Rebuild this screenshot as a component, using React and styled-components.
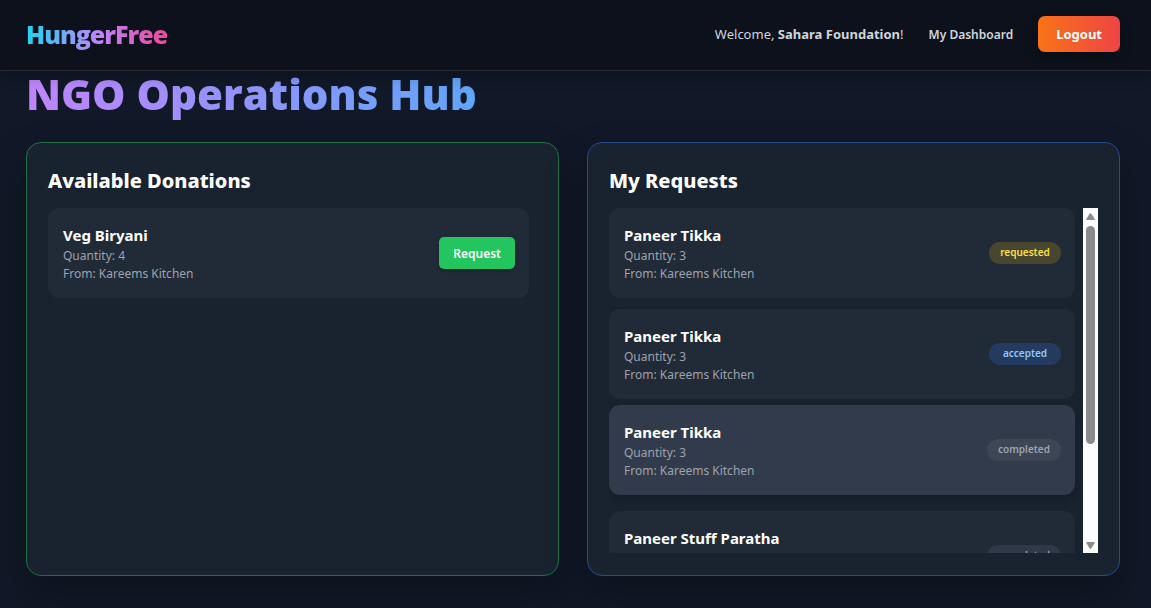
import React from "react";
import styled, { createGlobalStyle, css } from "styled-components";

const GlobalStyle = createGlobalStyle`
  *, *::before, *::after { box-sizing: border-box; }
  body {
    margin: 0;
    background: #111827;
    color: #fff;
    font-family: "Noto Sans", "Open Sans", sans-serif;
    font-size: 14px;
  }
  h1, h2, h3, p, ul { margin: 0; padding: 0; }
  button { font: inherit; color: inherit; border: 0; cursor: pointer; }
`;

const Page = styled.div`
  min-height: 100vh;
  background: #111827;
`;

const Header = styled.header`
  position: sticky;
  top: 0;
  z-index: 10;
  display: flex;
  align-items: center;
  justify-content: space-between;
  padding: 16px 31px 18px 26px;
  background: #0c111b;
  border-bottom: 1px solid #262a33;
  box-shadow: 0 4px 14px rgba(0, 0, 0, 0.3);
`;

const gradientText = css`
  width: fit-content;
  color: transparent;
  background-clip: text;
  -webkit-background-clip: text;
  font-family: "Open Sans", "Noto Sans", sans-serif;
  font-weight: 800;
`;

const Logo = styled.a`
  ${gradientText}
  background-image: linear-gradient(90deg, #22d3ee, #c084fc 52%, #ec4899);
  font-size: 25px;
  line-height: 36px;
  letter-spacing: -1px;
  text-decoration: none;
`;

const Nav = styled.nav`
  display: flex;
  align-items: center;
  gap: 25px;
  color: #d1d5db;
`;

const Welcome = styled.span`
  font-size: 13px;
  strong { font-weight: 700; }
`;

const NavLink = styled.a`
  color: inherit;
  font-size: 12px;
  font-weight: 600;
  text-decoration: none;
`;

const LogoutButton = styled.button`
  padding: 0 18px;
  height: 36px;
  border-radius: 7px;
  background: linear-gradient(90deg, #f97316, #ef4444);
  box-shadow: 0 6px 12px rgba(0, 0, 0, 0.25);
  color: #fff;
  font-size: 13px;
  font-weight: 700;
`;

const Main = styled.main`
  padding: 0 31px 32px 26px;
`;

const Title = styled.h1`
  ${gradientText}
  background-image: linear-gradient(90deg, #c084fc, #60a5fa);
  padding-bottom: 25px;
  font-size: 42px;
  line-height: 46px;
`;

const Columns = styled.div`
  display: grid;
  grid-template-columns: 1fr 1fr;
  gap: 28px;
`;

const Panel = styled.section`
  min-width: 0;
  padding: 22px 21px;
  border: 1px solid ${(p) => p.$border};
  border-radius: 15px;
  background: #19222f;
  box-shadow: 0 20px 40px rgba(0, 0, 0, 0.25);
`;

const PanelTitle = styled.h2`
  margin-bottom: 12px;
  font-size: 20px;
  line-height: 31px;
  font-weight: 800;
`;

const ScrollArea = styled.div`
  display: flex;
  height: 345px;
`;

const List = styled.ul`
  flex: 1;
  min-width: 0;
  display: flex;
  flex-direction: column;
  gap: 11px;
  padding-right: 8px;
  overflow-y: auto;
  scrollbar-width: none;
  list-style: none;
`;

const Card = styled.li`
  flex-shrink: 0;
  display: flex;
  align-items: center;
  justify-content: space-between;
  padding: 15px 14px 15px 15px;
  border-radius: 11px;
  background: #212a37;
  ${(p) =>
    p.$raised &&
    css`
      background: #323b4b;
      transform: translateY(-5px);
      box-shadow: 0 4px 8px rgba(0, 0, 0, 0.2);
    `}
`;

const ItemName = styled.h3`
  font-size: 15px;
  line-height: 24px;
  font-weight: 700;
`;

const Detail = styled.p`
  color: #9ca3af;
  font-size: 12px;
  line-height: 18px;
`;

const RequestButton = styled.button`
  padding: 0 14px;
  height: 32px;
  border-radius: 5px;
  background: #22c55e;
  box-shadow: 0 2px 4px rgba(0, 0, 0, 0.2);
  color: #fff;
  font-size: 12px;
  font-weight: 600;
`;

const tones = {
  requested: { bg: "#49462f", fg: "#fde047", width: 72 },
  accepted: { bg: "#243b60", fg: "#93c5fd", width: 72 },
  completed: { bg: "#3e4656", fg: "#9ca3af", width: 74 },
  completedResting: { bg: "#303947", fg: "#9ca3af", width: 74 },
};

const Badge = styled.span`
  min-width: ${(p) => tones[p.$tone].width}px;
  padding-bottom: 2px;
  border-radius: 11px;
  background: ${(p) => tones[p.$tone].bg};
  color: ${(p) => tones[p.$tone].fg};
  font-size: 10px;
  line-height: 20px;
  font-weight: 600;
  text-align: center;
`;

const Scrollbar = styled.div`
  display: flex;
  flex-direction: column;
  align-items: center;
  width: 15px;
  padding: 5px 0 4px;
  background: #fcfcfc;
`;

const Track = styled.div`
  flex: 1;
  width: 9px;
  margin: 6px 0 5px;
`;

const Thumb = styled.div`
  height: 70%;
  border-radius: 5px;
  background: #8b8b8b;
`;

const Arrow = ({ down }) => (
  <svg width="9" height="7" viewBox="0 0 9 7" aria-hidden="true">
    <path
      d={down ? "M1 0h7q1 0 .7 1L5.4 6.2q-.9 1.2-1.8 0L.3 1Q0 0 1 0z" : "M1 7h7q1 0 .7-1L5.4.8q-.9-1.2-1.8 0L.3 6Q0 7 1 7z"}
      fill="#8b8b8b"
    />
  </svg>
);

const requests = [
  { name: "Paneer Tikka", quantity: 3, status: "requested", tone: "requested" },
  { name: "Paneer Tikka", quantity: 3, status: "accepted", tone: "accepted" },
  { name: "Paneer Tikka", quantity: 3, status: "completed", tone: "completed", raised: true },
  { name: "Paneer Stuff Paratha", quantity: 3, status: "completed", tone: "completedResting" },
];

const Donation = ({ name, quantity, raised, children }) => (
  <Card $raised={raised}>
    <div>
      <ItemName>{name}</ItemName>
      <Detail>Quantity: {quantity}</Detail>
      <Detail>From: Kareems Kitchen</Detail>
    </div>
    {children}
  </Card>
);

export default function App() {
  return (
    <Page>
      <GlobalStyle />
      <Header>
        <Logo href="#">HungerFree</Logo>
        <Nav>
          <Welcome>
            Welcome, <strong>Sahara Foundation</strong>!
          </Welcome>
          <NavLink href="#dashboard">My Dashboard</NavLink>
          <LogoutButton type="button">Logout</LogoutButton>
        </Nav>
      </Header>
      <Main>
        <Title>NGO Operations Hub</Title>
        <Columns>
          <Panel $border="#1f7145">
            <PanelTitle>Available Donations</PanelTitle>
            <List>
              <Donation name="Veg Biryani" quantity={4}>
                <RequestButton type="button">Request</RequestButton>
              </Donation>
            </List>
          </Panel>
          <Panel $border="#284c8c">
            <PanelTitle>My Requests</PanelTitle>
            <ScrollArea>
              <List>
                {requests.map((r, i) => (
                  <Donation key={i} {...r}>
                    <Badge $tone={r.tone}>{r.status}</Badge>
                  </Donation>
                ))}
              </List>
              <Scrollbar aria-hidden="true">
                <Arrow />
                <Track>
                  <Thumb />
                </Track>
                <Arrow down />
              </Scrollbar>
            </ScrollArea>
          </Panel>
        </Columns>
      </Main>
    </Page>
  );
}
